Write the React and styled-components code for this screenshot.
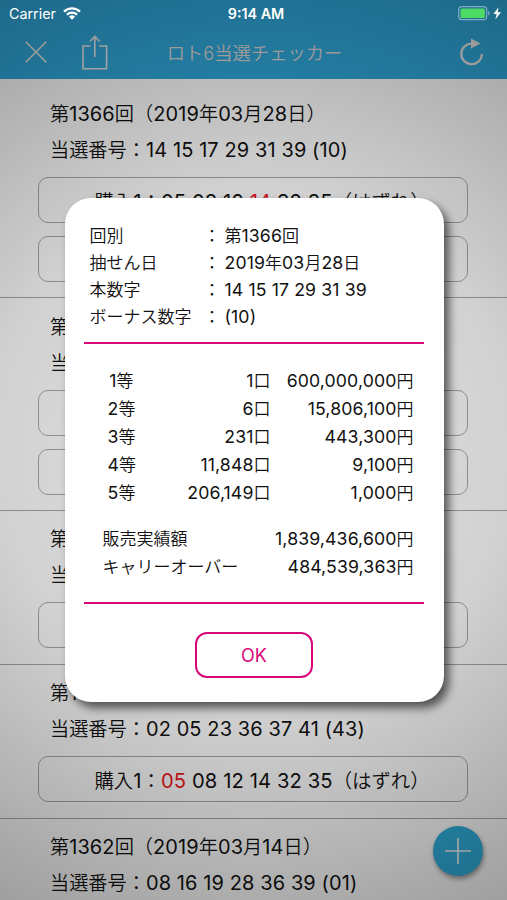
import styled, { createGlobalStyle } from "styled-components";

const draws = [
  {
    no: 1366,
    date: "2019年03月28日",
    numbers: "14 15 17 29 31 39 (10)",
    tickets: [["05 08 12 ", "14", " 32 35"], ["", "", ""]],
  },
  {
    no: 1365,
    date: "2019年03月25日",
    numbers: "",
    tickets: [["", "", ""], ["", "", ""]],
  },
  {
    no: 1364,
    date: "2019年03月21日",
    numbers: "",
    tickets: [["", "", ""]],
  },
  {
    no: 1363,
    date: "2019年03月18日",
    numbers: "02 05 23 36 37 41 (43)",
    tickets: [["", "05", " 08 12 14 32 35"]],
  },
  {
    no: 1362,
    date: "2019年03月14日",
    numbers: "08 16 19 28 36 39 (01)",
    tickets: [],
  },
];

const info = [
  ["回別", "第1366回"],
  ["抽せん日", "2019年03月28日"],
  ["本数字", "14 15 17 29 31 39"],
  ["ボーナス数字", "(10)"],
];

const prizes = [
  ["1等", "1口", "600,000,000円"],
  ["2等", "6口", "15,806,100円"],
  ["3等", "231口", "443,300円"],
  ["4等", "11,848口", "9,100円"],
  ["5等", "206,149口", "1,000円"],
];

const totals = [
  ["販売実績額", "1,839,436,600円"],
  ["キャリーオーバー", "484,539,363円"],
];

// digits are set a bit larger than the kanji around them
const Mixed = ({ text }) => (
  <span>
    {text
      .split(/([\d,() ]+)/)
      .map((part, i) => (i % 2 ? <Num key={i}>{part}</Num> : part))}
  </span>
);

const App = () => {
  return (
    <>
      <GlobalStyle />
      <Screen>
        <Header>
          <NavBar>
            <NavLeft>
              <svg width="22" height="22" viewBox="0 0 22 22">
                <path d="M0.800 0.800 21.200 21.200M21.200 0.800 0.800 21.200" />
              </svg>
              <svg width="26" height="35" viewBox="0 0 26 35">
                <path d="M8.500 11H1v22.700h23.600V11h-7.500M12.800 22V1.500M8 6.500l4.800-5 4.800 5" />
              </svg>
            </NavLeft>
            <NavTitle>ロト6当選チェッカー</NavTitle>
            <svg width="26" height="28" viewBox="0 0 26 28">
              <path
                d="M14.500 5.600A10.300 10.300 0 1 0 23.900 16"
                strokeWidth="2.200"
              />
              <path d="M13 0.500v10l9.500-5z" fill="#e8e8e8" stroke="none" />
            </svg>
          </NavBar>
        </Header>
        <List>
          {draws.map((draw) => (
            <Draw key={draw.no}>
              <Line>
                <Mixed text={`第${draw.no}回（${draw.date}）`} />
              </Line>
              <Line>
                <Mixed text={`当選番号：${draw.numbers}`} />
              </Line>
              <Tickets>
                {draw.tickets.map(([before, hit, after], i) => (
                  <Ticket key={i}>
                    {hit && (
                      <span>
                        <Mixed text={`購入${i + 1}：${before}`} />
                        <Hit>{hit}</Hit>
                        <Mixed text={`${after}（はずれ）`} />
                      </span>
                    )}
                  </Ticket>
                ))}
              </Tickets>
            </Draw>
          ))}
        </List>
        <AddButton>
          <svg width="28" height="28" viewBox="0 0 28 28">
            <path d="M14 1v26M1 14h26" />
          </svg>
        </AddButton>

        <Overlay>
          <Dialog>
            <Info>
              {info.map(([label, value]) => (
                <InfoRow key={label}>
                  <InfoLabel>{label}</InfoLabel>
                  <Colon>：</Colon>
                  <Mixed text={value} />
                </InfoRow>
              ))}
            </Info>
            <Rule />
            <Prizes>
              {prizes.map(([rank, count, amount]) => (
                <PrizeRow key={rank}>
                  <Mixed text={rank} />
                  <Mixed text={count} />
                  <Mixed text={amount} />
                </PrizeRow>
              ))}
            </Prizes>
            <Totals>
              {totals.map(([label, amount]) => (
                <TotalRow key={label}>
                  <span>{label}</span>
                  <Mixed text={amount} />
                </TotalRow>
              ))}
            </Totals>
            <Rule />
            <OkButton>OK</OkButton>
          </Dialog>
        </Overlay>

        <StatusBar>
          <StatusSide>
            Carrier
            <svg width="18" height="13" viewBox="0 0 18 13">
              <g fill="none" stroke="#fff" strokeWidth="2.300">
                <path d="M1 4.600a11.500 11.500 0 0 1 16 0" />
                <path d="M3.900 7.700a7.300 7.300 0 0 1 10.200 0" />
              </g>
              <path d="M9 12.700 6 9.700a4.300 4.300 0 0 1 6 0z" fill="#fff" />
            </svg>
          </StatusSide>
          <Clock>9:14 AM</Clock>
          <StatusSide $end>
            <svg width="45" height="15" viewBox="0 0 45 15">
              <rect
                x="0.700"
                y="0.700"
                width="28"
                height="13"
                rx="3.200"
                fill="none"
                stroke="#7fb0c6"
                strokeWidth="1.200"
              />
              <rect
                x="2.500"
                y="2.500"
                width="24.400"
                height="9.400"
                rx="1.500"
                fill="#4cd964"
              />
              <path d="M30.200 5c1.700.6 1.700 3.900 0 4.500z" fill="#7fb0c6" />
              <path
                d="M40.500 1.200 35.500 8h3.200l-1.400 5.500L43 6.300h-3.400z"
                fill="#fff"
              />
            </svg>
          </StatusSide>
        </StatusBar>
      </Screen>
    </>
  );
};

export default App;

const GlobalStyle = createGlobalStyle`
  * {
    box-sizing: border-box;
  }
  body {
    margin: 0;
    overflow: hidden;
  }
`;

const Screen = styled.div`
  position: relative;
  width: 507px;
  height: 900px;
  overflow: hidden;
  background-color: #fff;
  color: #111;
  font-family: Inter, "Noto Sans CJK JP", sans-serif;
  font-size: 19.2px;
  font-weight: 350;
  white-space: nowrap;
`;

const Num = styled.span`
  font-size: 1.04em;
  font-weight: 400;
  letter-spacing: 0.12px;
`;

const Header = styled.header`
  height: 79px;
  padding-top: 26px;
  background-color: #30a9dc;
`;

const NavBar = styled.div`
  display: grid;
  grid-template-columns: 100px 1fr 100px;
  align-items: center;
  height: 52px;
  padding: 0 23px 0 25px;

  svg {
    fill: none;
    stroke: #e8e8e8;
    stroke-width: 1.6;
  }
  > svg {
    justify-self: end;
  }
`;

const NavLeft = styled.div`
  display: flex;
  align-items: center;
  gap: 35px;
`;

const NavTitle = styled.h1`
  margin: 0;
  color: #dedad6;
  font-size: 18.3px;
  font-weight: 350;
  text-align: center;
`;

const List = styled.main`
  padding-top: 7px;
`;

const Draw = styled.section`
  padding: 10.4px 39px 15.4px 38px;
  border-bottom: 1px solid #a9a9a9;
`;

const Line = styled.p`
  height: 36px;
  margin: 0;
  padding-left: 12px;
  line-height: 36px;
`;

const Tickets = styled.div`
  display: flex;
  flex-direction: column;
  gap: 12.7px;
  padding-top: 9px;
`;

const Ticket = styled.div`
  display: flex;
  align-items: center;
  justify-content: center;
  height: 46px;
  padding-left: 18px;
  border: 1px solid #aaa;
  border-radius: 10px;
  font-size: 19.4px;
`;

const Hit = styled(Num)`
  color: #f01820;
`;

const AddButton = styled.button`
  position: absolute;
  right: 24px;
  bottom: 24px;
  display: flex;
  align-items: center;
  justify-content: center;
  width: 50px;
  height: 50px;
  padding: 0;
  border: none;
  border-radius: 50%;
  background-color: #30afdc;
  box-shadow: 1px 3px 5px rgba(0, 0, 0, 0.4);

  svg {
    fill: none;
    stroke: #f4f4f4;
    stroke-width: 1.6;
  }
`;

const Overlay = styled.div`
  position: absolute;
  inset: 0;
  display: flex;
  align-items: center;
  justify-content: center;
  padding-left: 1px;
  background: radial-gradient(
    circle 520px at 50% 50%,
    rgba(0, 0, 0, 0.1) 0%,
    rgba(0, 0, 0, 0.18) 50%,
    rgba(0, 0, 0, 0.38) 100%
  );
`;

const Dialog = styled.div`
  display: flex;
  flex-direction: column;
  align-items: center;
  width: 379px;
  height: 504px;
  padding: 25px 19px 0;
  border-radius: 26px;
  background-color: #fff;
  box-shadow: 5px 6px 10px rgba(0, 0, 0, 0.6);
  font-size: 17px;
`;

const Info = styled.div`
  width: 100%;
  height: 118.5px;
  padding-left: 6px;
`;

const InfoRow = styled.div`
  display: flex;
  align-items: baseline;
  height: 27px;
  line-height: 26px;
`;

const InfoLabel = styled.span`
  width: 114px;
`;

const Colon = styled.span`
  width: 21px;
`;

const Rule = styled.hr`
  flex: none;
  width: 340px;
  height: 2.5px;
  margin: 0;
  border: none;
  background-color: #d9087a;
`;

const Prizes = styled.div`
  width: 100%;
  padding: 23px 11px 0 24px;
`;

const PrizeRow = styled.div`
  display: grid;
  grid-template-columns: 26px 137px 1fr;
  height: 28px;
  line-height: 28px;
  text-align: right;
`;

const Totals = styled.div`
  width: 100%;
  height: 94.5px;
  padding: 18px 11px 0 19px;
`;

const TotalRow = styled.div`
  display: flex;
  justify-content: space-between;
  height: 28px;
  line-height: 28px;
`;

const OkButton = styled.button`
  width: 118px;
  height: 46px;
  margin-top: 28px;
  border: 2px solid #d9087a;
  border-radius: 12px;
  background-color: #fff;
  color: #d9087a;
  font-family: inherit;
  font-size: 18px;
`;

const StatusBar = styled.div`
  position: absolute;
  top: 0;
  left: 0;
  display: grid;
  grid-template-columns: 1fr auto 1fr;
  align-items: center;
  width: 100%;
  height: 27px;
  padding: 0 4px 0 9px;
  color: #fff;
  font-size: 14.3px;
  font-weight: 400;
`;

const StatusSide = styled.div`
  display: flex;
  align-items: center;
  justify-content: ${(props) => (props.$end ? "flex-end" : "flex-start")};
  gap: 7px;
`;

const Clock = styled.span`
  font-weight: 600;
`;
